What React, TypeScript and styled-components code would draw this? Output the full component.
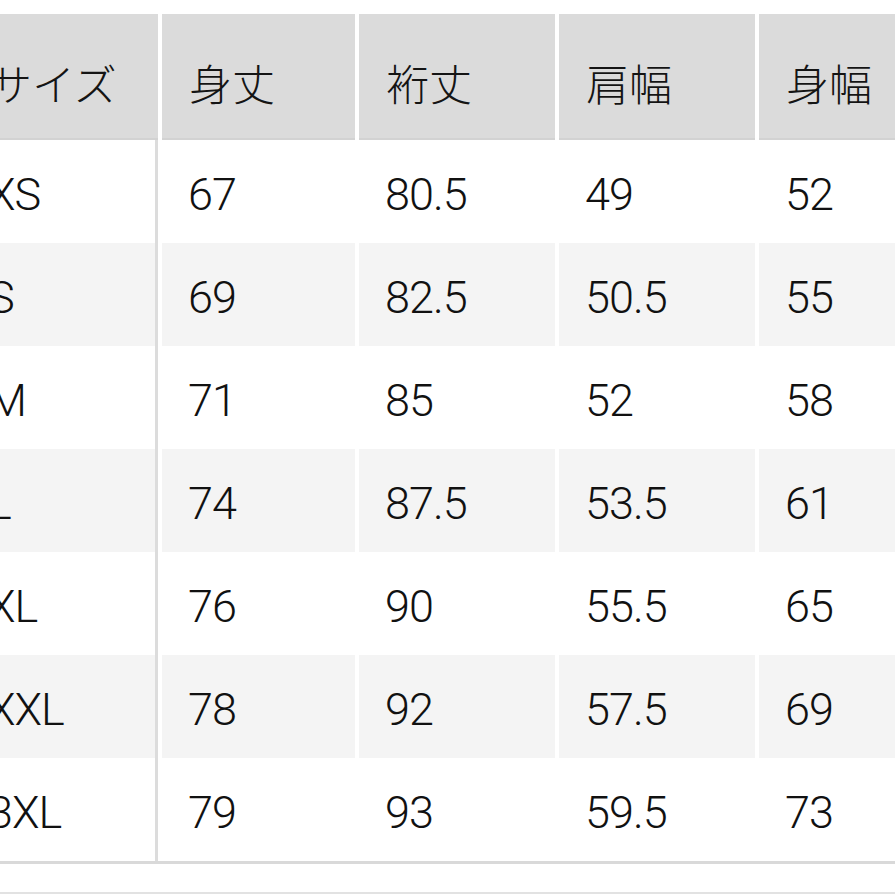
import styled, { createGlobalStyle } from "styled-components";

const GlobalStyle = createGlobalStyle`
  html, body {
    margin: 0;
    padding: 0;
    background: #ffffff;
  }
  body {
    font-family: Roboto, "Noto Sans CJK JP", sans-serif;
    color: #151515;
  }
`;

interface ISizeRow {
  size: string;
  length: string;
  sleeve: string;
  shoulder: string;
  width: string;
}

const HEADERS = ["サイズ", "身丈", "裄丈", "肩幅", "身幅"];

const ROWS: ISizeRow[] = [
  { size: "XS", length: "67", sleeve: "80.5", shoulder: "49", width: "52" },
  { size: "S", length: "69", sleeve: "82.5", shoulder: "50.5", width: "55" },
  { size: "M", length: "71", sleeve: "85", shoulder: "52", width: "58" },
  { size: "L", length: "74", sleeve: "87.5", shoulder: "53.5", width: "61" },
  { size: "XL", length: "76", sleeve: "90", shoulder: "55.5", width: "65" },
  { size: "XXL", length: "78", sleeve: "92", shoulder: "57.5", width: "69" },
  { size: "3XL", length: "79", sleeve: "93", shoulder: "59.5", width: "73" },
];

const App = () => {
  return (
    <>
      <GlobalStyle />
      <Frame>
        <Table>
          <HeaderRow>
            {HEADERS.map((h) => (
              <HeaderCell key={h}>{h}</HeaderCell>
            ))}
          </HeaderRow>
          {ROWS.map((row, i) => (
            <BodyRow key={row.size} $striped={i % 2 === 1}>
              <SizeCell>{row.size}</SizeCell>
              <Cell>{row.length}</Cell>
              <Cell>{row.sleeve}</Cell>
              <Cell>{row.shoulder}</Cell>
              <Cell>{row.width}</Cell>
            </BodyRow>
          ))}
        </Table>
        <Footer />
      </Frame>
    </>
  );
};

const Frame = styled.div`
  width: 895px;
  height: 895px;
  overflow: hidden;
  padding-top: 14px;
  box-sizing: border-box;
`;

const Table = styled.div`
  margin-left: -38px;
  width: 1000px;
  display: flex;
  flex-direction: column;
  border-bottom: 3px solid #d9d9d9;
`;

const rowGrid = `
  display: grid;
  grid-template-columns: 196px 193px 196px 196px 196px;
  column-gap: 4px;
`;

const HeaderRow = styled.div`
  ${rowGrid}
  height: 126px;
`;

const HeaderCell = styled.div`
  background-color: #dbdbdb;
  border-bottom: 2px solid #d2d2d2;
  box-sizing: border-box;
  display: flex;
  align-items: center;
  padding: 12px 0 0 27px;
  font-family: "Noto Sans CJK JP", sans-serif;
  font-size: 43px;
  font-weight: 300;
  line-height: 1;
  color: #141414;
  white-space: nowrap;
`;

interface IBodyRow {
  $striped: boolean;
}

const BodyRow = styled.div<IBodyRow>`
  ${rowGrid}
  height: 103px;

  & > div {
    background-color: ${(p) => (p.$striped ? "#f4f4f4" : "#ffffff")};
  }
`;

const Cell = styled.div`
  display: flex;
  align-items: center;
  padding: 6px 0 0 26px;
  box-sizing: border-box;
  font-family: Roboto, "Noto Sans", sans-serif;
  font-size: 45px;
  font-weight: 300;
  letter-spacing: -1px;
  line-height: 1;
  color: #111111;
  white-space: nowrap;
`;

const SizeCell = styled(Cell)`
  border-right: 3px solid #dcdcdc;
`;

const Footer = styled.div`
  margin-top: 28px;
  height: 2px;
  background-color: #e2e2e2;
`;

export default App;
